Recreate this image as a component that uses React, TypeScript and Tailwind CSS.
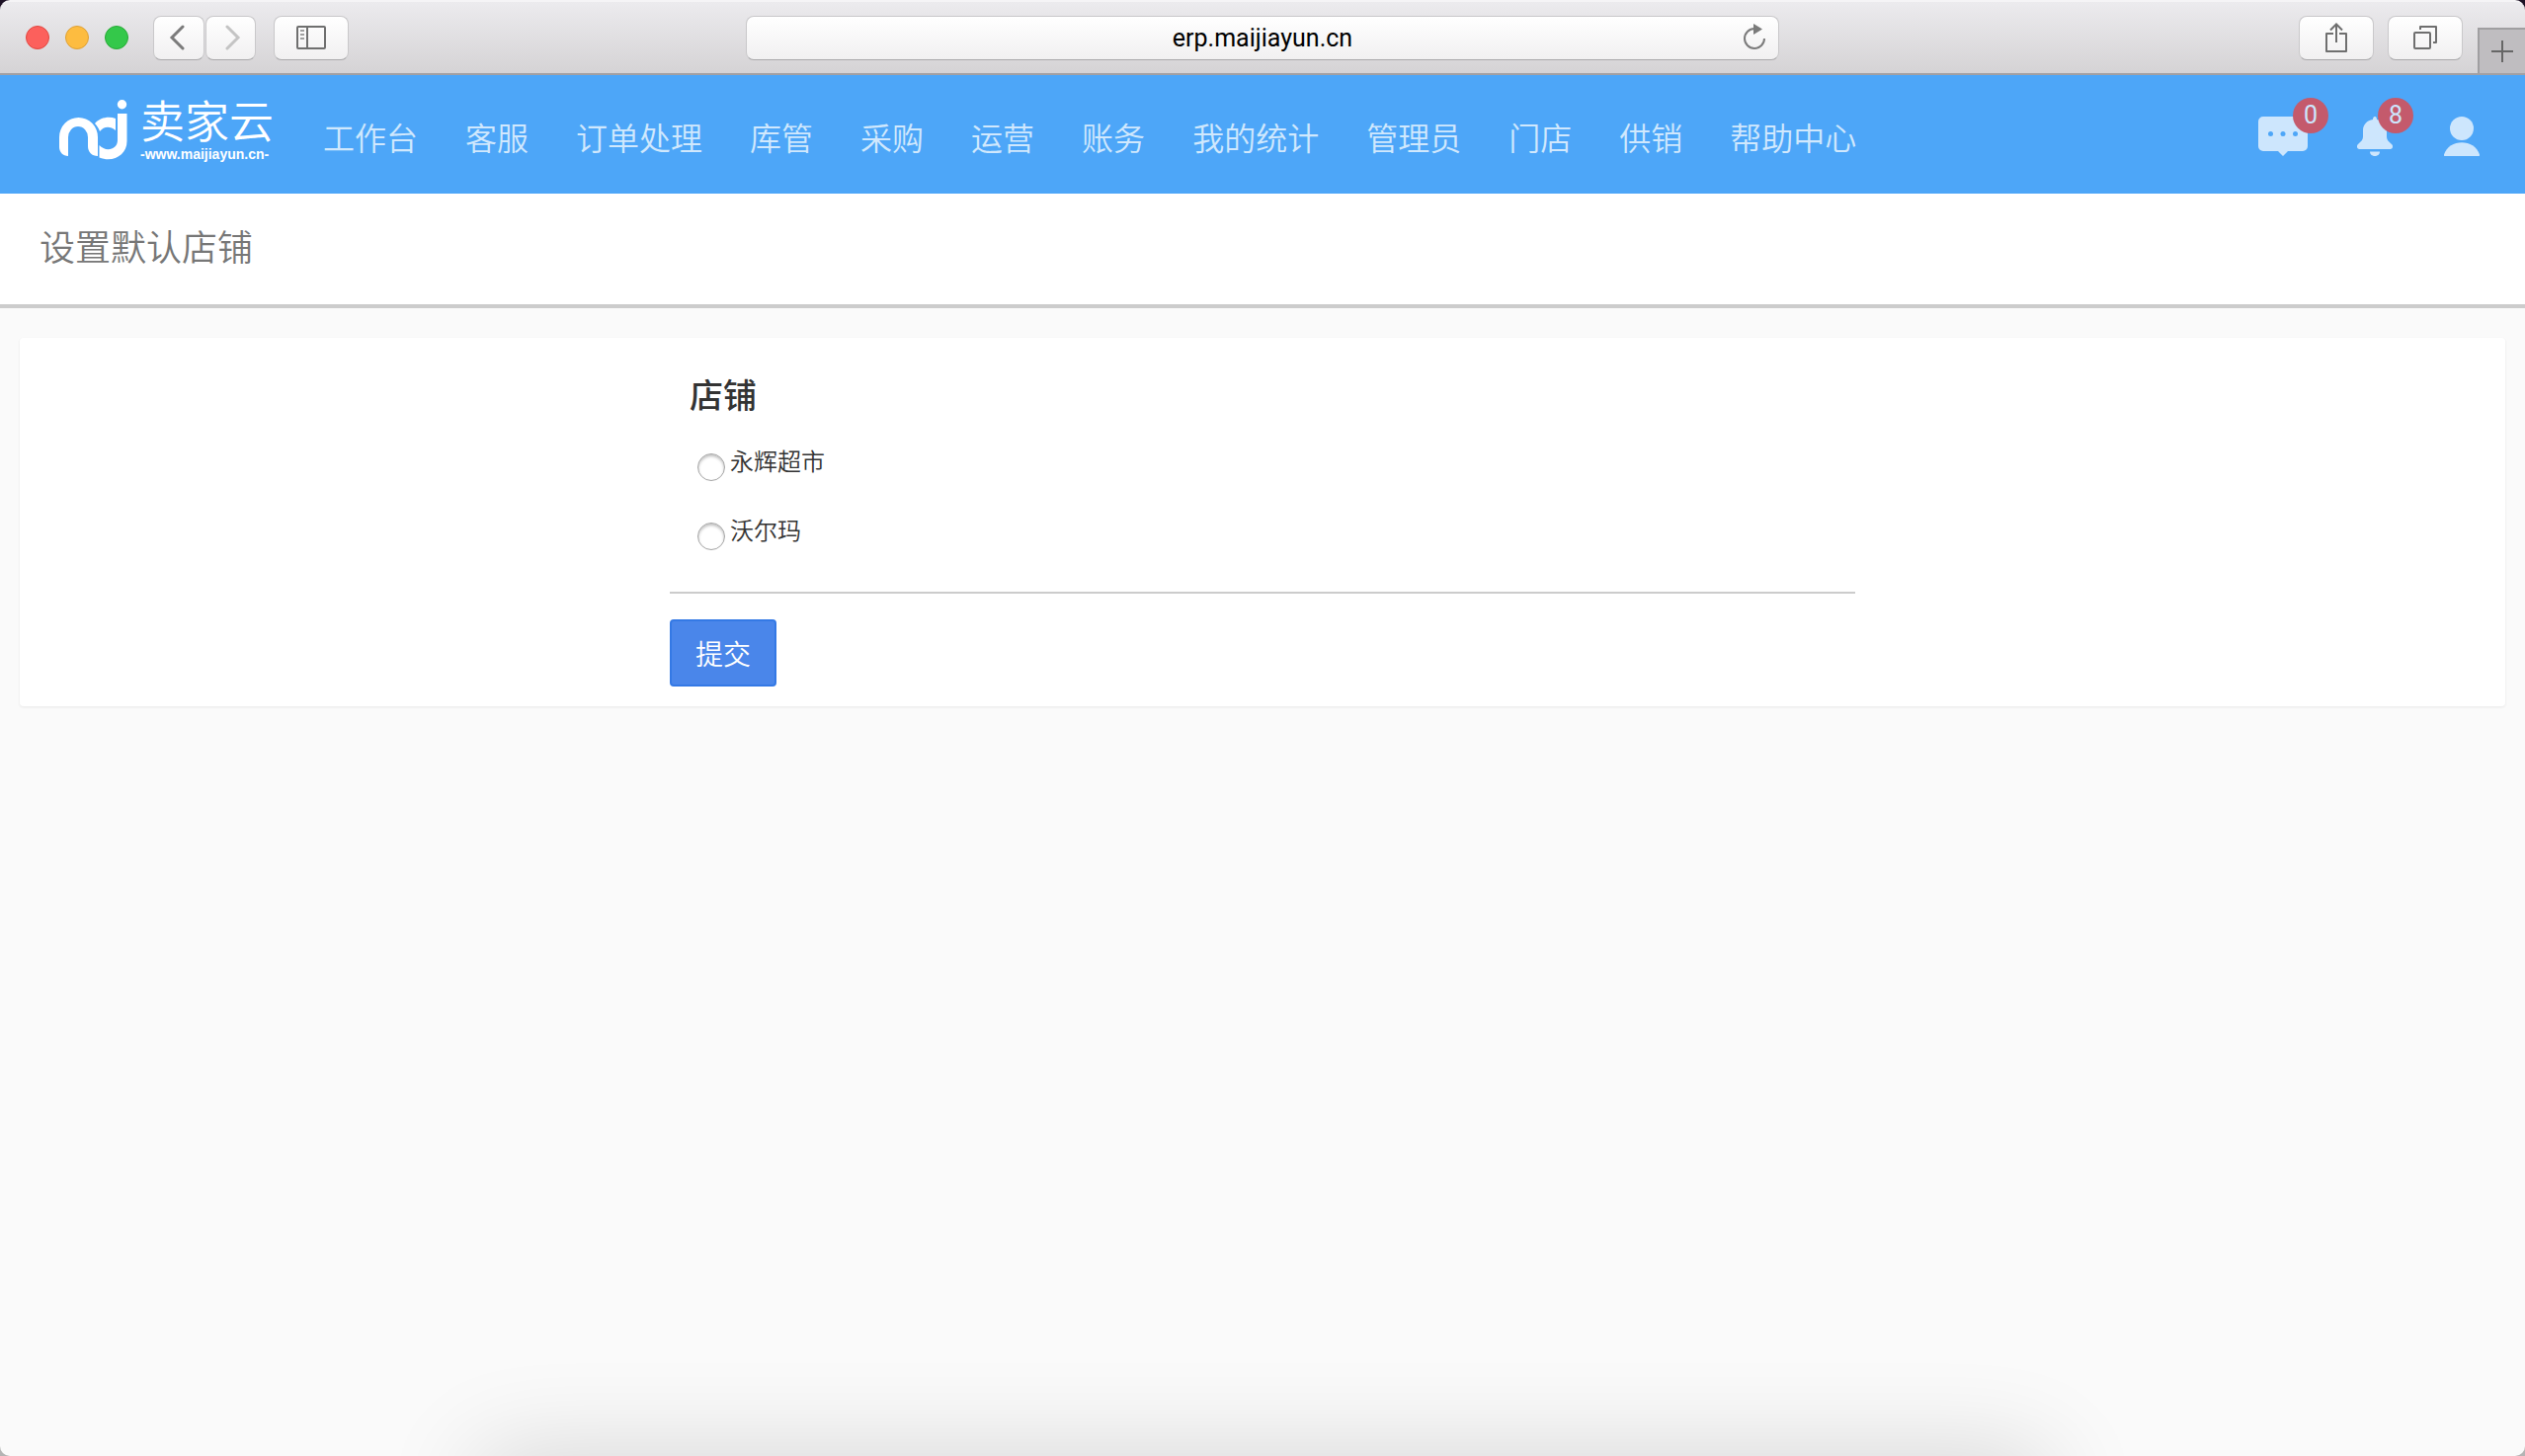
const navItems = [
  "工作台",
  "客服",
  "订单处理",
  "库管",
  "采购",
  "运营",
  "账务",
  "我的统计",
  "管理员",
  "门店",
  "供销",
  "帮助中心",
];

const shops = [
  { id: "yonghui", name: "永辉超市" },
  { id: "walmart", name: "沃尔玛" },
];

const toolbarButton =
  "flex h-[45px] items-center justify-center rounded-lg border border-[#c9c8ca] border-b-[#a9a8aa] bg-linear-to-b from-white to-[#f1f0f1]";

function BrowserToolbar() {
  return (
    <div className="bg-[#1d1226]">
      <div className="grid h-[76px] grid-cols-[755fr_1046fr_755fr] rounded-t-[10px] border-t-2 border-b-2 border-t-[#f5f4f6] border-b-[#a2a0a3] bg-linear-to-b from-[#ecebee] to-[#d5d3d5]">
        <div className="flex items-center pl-[26px]">
          <div className="flex gap-4">
            <span className="size-6 rounded-full border border-[#e2463f] bg-[#fc605c]" />
            <span className="size-6 rounded-full border border-[#dea034] bg-[#fdbc40]" />
            <span className="size-6 rounded-full border border-[#27aa35] bg-[#34c84a]" />
          </div>
          <div className="ml-[25px] flex gap-px">
            <button className={`${toolbarButton} w-[52px]`} aria-label="后退">
              <svg width="16" height="26" viewBox="0 0 16 26" fill="none" stroke="#7b7b7b" strokeWidth="3" className="mr-1">
                <path d="M14 2 3 13l11 11" strokeLinecap="round" />
              </svg>
            </button>
            <button className={`${toolbarButton} w-[51px]`} aria-label="前进">
              <svg width="16" height="26" viewBox="0 0 16 26" fill="none" stroke="#c4c4c4" strokeWidth="3" className="ml-1">
                <path d="m2 2 11 11L2 24" strokeLinecap="round" />
              </svg>
            </button>
          </div>
          <button className={`${toolbarButton} ml-[18px] w-[76px]`} aria-label="边栏">
            <svg width="30" height="24" viewBox="0 0 30 24" fill="none" stroke="#6f6f6f" strokeWidth="2">
              <rect x="1" y="1" width="28" height="22" rx="1" />
              <path d="M11 1v22" />
              <path d="M4 5h4M4 9h4M4 13h4" stroke="#a0a0a0" />
            </svg>
          </button>
        </div>

        <div className="flex items-center">
          <div className={`${toolbarButton} relative w-full`}>
            <input
              type="text"
              aria-label="地址"
              defaultValue="erp.maijiayun.cn"
              className="w-full bg-transparent pt-0.5 text-center font-['Roboto','Noto_Sans_CJK_SC',sans-serif] text-[25px] leading-8 text-black outline-none"
            />
            <button aria-label="重新载入" className="absolute right-3">
              <svg width="24" height="28" viewBox="0 0 24 28" fill="none">
                <path d="M12 5a10 10 0 1 0 10 10" stroke="#7b7b7b" strokeWidth="2" />
                <path d="M11 0 20 5.500 11 11z" fill="#7b7b7b" />
              </svg>
            </button>
          </div>
        </div>

        <div className="flex justify-end">
          <div className="mr-[15px] flex items-center gap-[14px]">
            <button className={`${toolbarButton} w-[76px]`} aria-label="共享">
              <svg width="22" height="30" viewBox="0 0 22 30" fill="none" stroke="#6f6f6f" strokeWidth="2">
                <path d="M8 11H1v18h20V11h-7" strokeLinejoin="round" />
                <path d="M11 20V1.500M5 7.500l6-6 6 6" />
              </svg>
            </button>
            <button className={`${toolbarButton} w-[76px]`} aria-label="显示标签页">
              <svg width="24" height="24" viewBox="0 0 24 24" fill="none" stroke="#6f6f6f" strokeWidth="2">
                <rect x="1" y="7" width="16" height="16" rx="1" />
                <path d="M7 4V1h16v16h-3" strokeLinejoin="round" />
              </svg>
            </button>
          </div>
          <button
            className="flex h-[46px] w-12 items-center justify-center self-end border-t-2 border-l-2 border-[#a09fa1] bg-[#bfbdc0]"
            aria-label="新建标签页"
          >
            <svg width="22" height="22" viewBox="0 0 22 22" stroke="#666" strokeWidth="2">
              <path d="M11 0v22M0 11h22" />
            </svg>
          </button>
        </div>
      </div>
    </div>
  );
}

function Logo() {
  return (
    <a href="#" className="flex items-start pb-3 text-white">
      <svg width="70" height="62" viewBox="0 0 70 62" fill="currentColor">
        <path d="M0 38a19.500 20 0 0 1 39 0v19c-6 0-10-4-10-10v-9a10 11 0 0 0-20 0v19c-5 0-9-4-9-9z" />
        <path d="M36 24c5-6 14-7.500 21-5v12c-6-5-12-4-16 1-1-3-3-6-5-8z" />
        <path d="M59 14h9.500v28c0 14-14 22-28 16.500V46c6 7 18.500 5 18.500-5z" />
        <circle cx="63.500" cy="4.700" r="4.700" />
      </svg>
      <span className="ml-[12px] flex flex-col gap-2">
        <span className="text-[45px] leading-10 font-[350]">卖家云</span>
        <span className="font-['Liberation_Sans',sans-serif] text-sm leading-[14px] font-bold">
          -www.maijiayun.cn-
        </span>
      </span>
    </a>
  );
}

function Badge({ count }: { count: number }) {
  return (
    <span className="absolute -top-[19px] -right-[21px] flex size-9 items-center justify-center rounded-full bg-[#c45a6c] font-['Roboto',sans-serif] text-[25px] leading-9">
      {count}
    </span>
  );
}

function SiteHeader() {
  return (
    <header className="flex h-[120px] items-center justify-between bg-[#4da6f8] pt-1 pr-[46px] pl-[60px]">
      <div className="flex items-center gap-[50px]">
        <Logo />
        <nav className="flex gap-12 text-[32px] leading-10 font-[350] text-[#d0e8fd]">
          {navItems.map((item) => (
            <a key={item} href="#" className="whitespace-nowrap">
              {item}
            </a>
          ))}
        </nav>
      </div>

      <div className="flex items-center text-[#cde6fd]">
        <button className="relative" aria-label="消息">
          <svg width="50" height="40" viewBox="0 0 50 40" fill="currentColor">
            <path d="M5 0h40a5 5 0 0 1 5 5v25a5 5 0 0 1-5 5H30l-5 5-5-5H5a5 5 0 0 1-5-5V5a5 5 0 0 1 5-5z" />
            <g fill="#4da6f8">
              <circle cx="12.500" cy="17.500" r="2.500" />
              <circle cx="25" cy="17.500" r="2.500" />
              <circle cx="37.500" cy="17.500" r="2.500" />
            </g>
          </svg>
          <Badge count={0} />
        </button>
        <button className="relative ml-[50px]" aria-label="通知">
          <svg width="36" height="40" viewBox="0 0 36 40" fill="currentColor">
            <path d="M18 0c1.500 0 2 1.500 2 3 6 1 10 5 10 11v6c0 4 2 5 5 8 2 2 1 5-1.500 5h-31C0 33-1 30 1 28c3-3 5-4 5-8v-6C6 8 10 4 16 3c0-1.500.5-3 2-3z" />
            <path d="M13 35.500h10c0 6-10 6-10 0z" />
          </svg>
          <Badge count={8} />
        </button>
        <button className="ml-[52px]" aria-label="用户">
          <svg width="36" height="40" viewBox="0 0 36 40" fill="currentColor">
            <circle cx="18" cy="12" r="12" />
            <path d="M0 38.500c5-16.500 31-16.500 36 0 .3 1.500-.5 1.500-1 1.500H1c-.5 0-1.300 0-1-1.500z" />
          </svg>
        </button>
      </div>
    </header>
  );
}

function ShopForm() {
  return (
    <form className="mx-auto max-w-[1200px] py-5 text-[#333]" onSubmit={(e) => e.preventDefault()}>
      <fieldset className="border-b-2 border-[#ccc] px-5 pb-[42px]">
        <legend className="pt-3.5 text-[34px] leading-[46px] font-medium">店铺</legend>
        <div className="mt-[27px] flex flex-col gap-8 pl-2">
          {shops.map((shop) => (
            <label key={shop.id} className="flex gap-[5px] text-2xl leading-[34px] font-[350]">
              <input
                type="radio"
                name="shop"
                value={shop.id}
                className="mt-2.5 size-7 appearance-none rounded-full border border-[#a6a6a6] bg-white shadow-[inset_0_2px_3px_rgba(0,0,0,0.25)] checked:border-8 checked:border-[#4a86ea]"
              />
              {shop.name}
            </label>
          ))}
        </div>
      </fieldset>
      <button
        type="submit"
        className="mt-[26px] h-[68px] rounded-sm border-2 border-[#3479e5] bg-[#4a86ea] px-6 text-[28px] leading-9 font-[350] text-white"
      >
        提交
      </button>
    </form>
  );
}

export default function App() {
  return (
    <div className="bg-[#b4b4b4]">
      <div className="relative flex min-h-screen flex-col overflow-hidden rounded-b-[10px] bg-[#fafafa] font-['Noto_Sans_CJK_SC',sans-serif]">
        <BrowserToolbar />
        <SiteHeader />
        <div className="border-b-4 border-[#ccc] bg-white px-10 pt-7 pb-9">
          <h1 className="text-[36px] leading-[48px] font-[350] text-[#777]">设置默认店铺</h1>
        </div>
        <main className="px-5 pt-[30px]">
          <section className="rounded-sm bg-white shadow-[0_1px_3px_rgba(0,0,0,0.08)]">
            <ShopForm />
          </section>
        </main>
        {/* shadow of the window in front */}
        <div className="absolute inset-x-[19%] top-full h-24 shadow-[0_0_100px_rgba(0,0,0,0.16)]" />
      </div>
    </div>
  );
}
